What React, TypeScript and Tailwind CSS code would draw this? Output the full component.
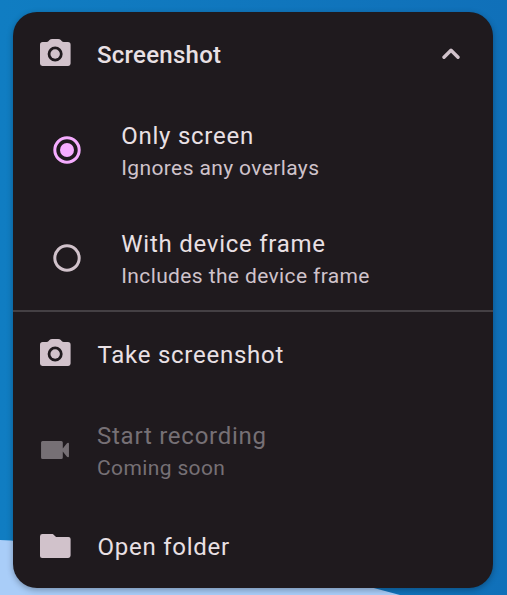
import type { ReactNode } from "react";

function CameraIcon() {
  return (
    <svg viewBox="0 0 24 24" className="size-9 shrink-0 text-[#d1c2cb]" fill="currentColor">
      <path
        fillRule="evenodd"
        d="M10.1 2Q9 2 8.3 2.7L7.6 3.5Q7.1 4 6.4 4H3.8A1.8 1.8 0 0 0 2 5.8V18.4A1.6 1.6 0 0 0 3.6 20H20.8A1.6 1.6 0 0 0 22.4 18.4V5.8A1.8 1.8 0 0 0 20.6 4H17.8Q17.1 4 16.6 3.5L15.9 2.7Q15.2 2 14.1 2ZM12.1 7a5 5 0 1 1 0 10a5 5 0 0 1 0-10Z"
      />
      <circle cx="12.1" cy="12" r="3.15" />
    </svg>
  );
}

function VideoIcon() {
  return (
    <svg viewBox="0 0 24 24" className="size-9 shrink-0 text-[#767075]" fill="currentColor">
      <path d="M17.2 11V7a1 1 0 0 0-1-1H3.7a1 1 0 0 0-1 1v10a1 1 0 0 0 1 1h12.5a1 1 0 0 0 1-1v-4l2.5 3.2q.5.6 1.1.6.5 0 .5-.7V7.9q0-.7-.5-.7-.6 0-1.1.6Z" />
    </svg>
  );
}

function FolderIcon() {
  return (
    <svg viewBox="0 0 24 24" className="size-9 shrink-0 text-[#d1c2cb]" fill="currentColor">
      <path d="M10.4 4H3.6A1.6 1.6 0 0 0 2 5.6V18.6A1.4 1.4 0 0 0 3.4 20H20.8A1.6 1.6 0 0 0 22.4 18.4V7.4A1.4 1.4 0 0 0 21 6H12.7L11.1 4.5Q10.8 4 10.4 4Z" />
    </svg>
  );
}

function Radio({ checked }: { checked?: boolean }) {
  return (
    <svg viewBox="0 0 28 28" className={checked ? "size-7 shrink-0 text-[#f5acff]" : "size-7 shrink-0 text-[#d1c2cb]"}>
      <circle cx="14" cy="14" r="12.2" fill="none" stroke="currentColor" strokeWidth="3" />
      {checked && <circle cx="14" cy="14" r="7" fill="currentColor" />}
    </svg>
  );
}

function Labels({ title, subtitle, muted }: { title: string; subtitle?: string; muted?: boolean }) {
  return (
    <div className="flex flex-col whitespace-nowrap">
      <span className={"text-[24px] tracking-[0.75px] " + (subtitle ? "pt-0.5 leading-[34px] " : "pt-0.5 pl-[0.5px] leading-9 ") + (muted ? "text-[#767075]" : "text-[#e9e0e4]")}>
        {title}
      </span>
      {subtitle && (
        <span className={"text-[21px] leading-[30px] tracking-[0.375px] " + (muted ? "text-[#767075]" : "text-[#cfc3cb]")}>
          {subtitle}
        </span>
      )}
    </div>
  );
}

function Tile({ icon, children }: { icon: ReactNode; children: ReactNode }) {
  return (
    <div className="flex h-[84px] items-center gap-6 pl-6">
      {icon}
      {children}
    </div>
  );
}

function RadioTile({ title, subtitle, checked }: { title: string; subtitle: string; checked?: boolean }) {
  return (
    <div className="flex h-[108px] items-center gap-10 pl-10">
      <Radio checked={checked} />
      <div className="pl-[0.25px]">
        <Labels title={title} subtitle={subtitle} />
      </div>
    </div>
  );
}

export default function App() {
  return (
    <div className="relative h-[595px] w-[507px] overflow-hidden bg-linear-to-r from-[#107dc2] to-[#1070b9] px-[13px] pt-3 font-['Roboto',sans-serif]">
      <svg className="absolute inset-0 h-full w-full" viewBox="0 0 507 595">
        <path d="M0 540Q10 540 24 542L370 587L400 595H0Z" fill="#a9cdf8" />
      </svg>
      <div className="relative h-[576px] w-[480px] rounded-3xl bg-[#1f1a1e] shadow-[0_2px_6px_rgba(0,0,0,0.3)]">
        <div className="flex h-[84px] items-center pr-[33px] pl-6">
          <CameraIcon />
          <span className="ml-6 flex-1 pt-0.5 text-[24px] leading-9 font-medium tracking-[0.26px] text-[#e9e0e4]">Screenshot</span>
          <svg viewBox="0 0 18 12" className="h-3 w-[18px]" fill="none" stroke="#d1c2cb" strokeWidth="3.4" strokeLinecap="round" strokeLinejoin="round">
            <path d="M2 9.3L9 2.3L16 9.3" />
          </svg>
        </div>
        <RadioTile title="Only screen" subtitle="Ignores any overlays" checked />
        <div className="border-b-2 border-[#444044]">
          <div className="-mb-[2px]">
            <RadioTile title="With device frame" subtitle="Includes the device frame" />
          </div>
        </div>
        <Tile icon={<CameraIcon />}>
          <Labels title="Take screenshot" />
        </Tile>
        <div className="flex h-[108px] items-center gap-6 pl-6">
          <VideoIcon />
          <Labels title="Start recording" subtitle="Coming soon" muted />
        </div>
        <Tile icon={<FolderIcon />}>
          <Labels title="Open folder" />
        </Tile>
      </div>
    </div>
  );
}
